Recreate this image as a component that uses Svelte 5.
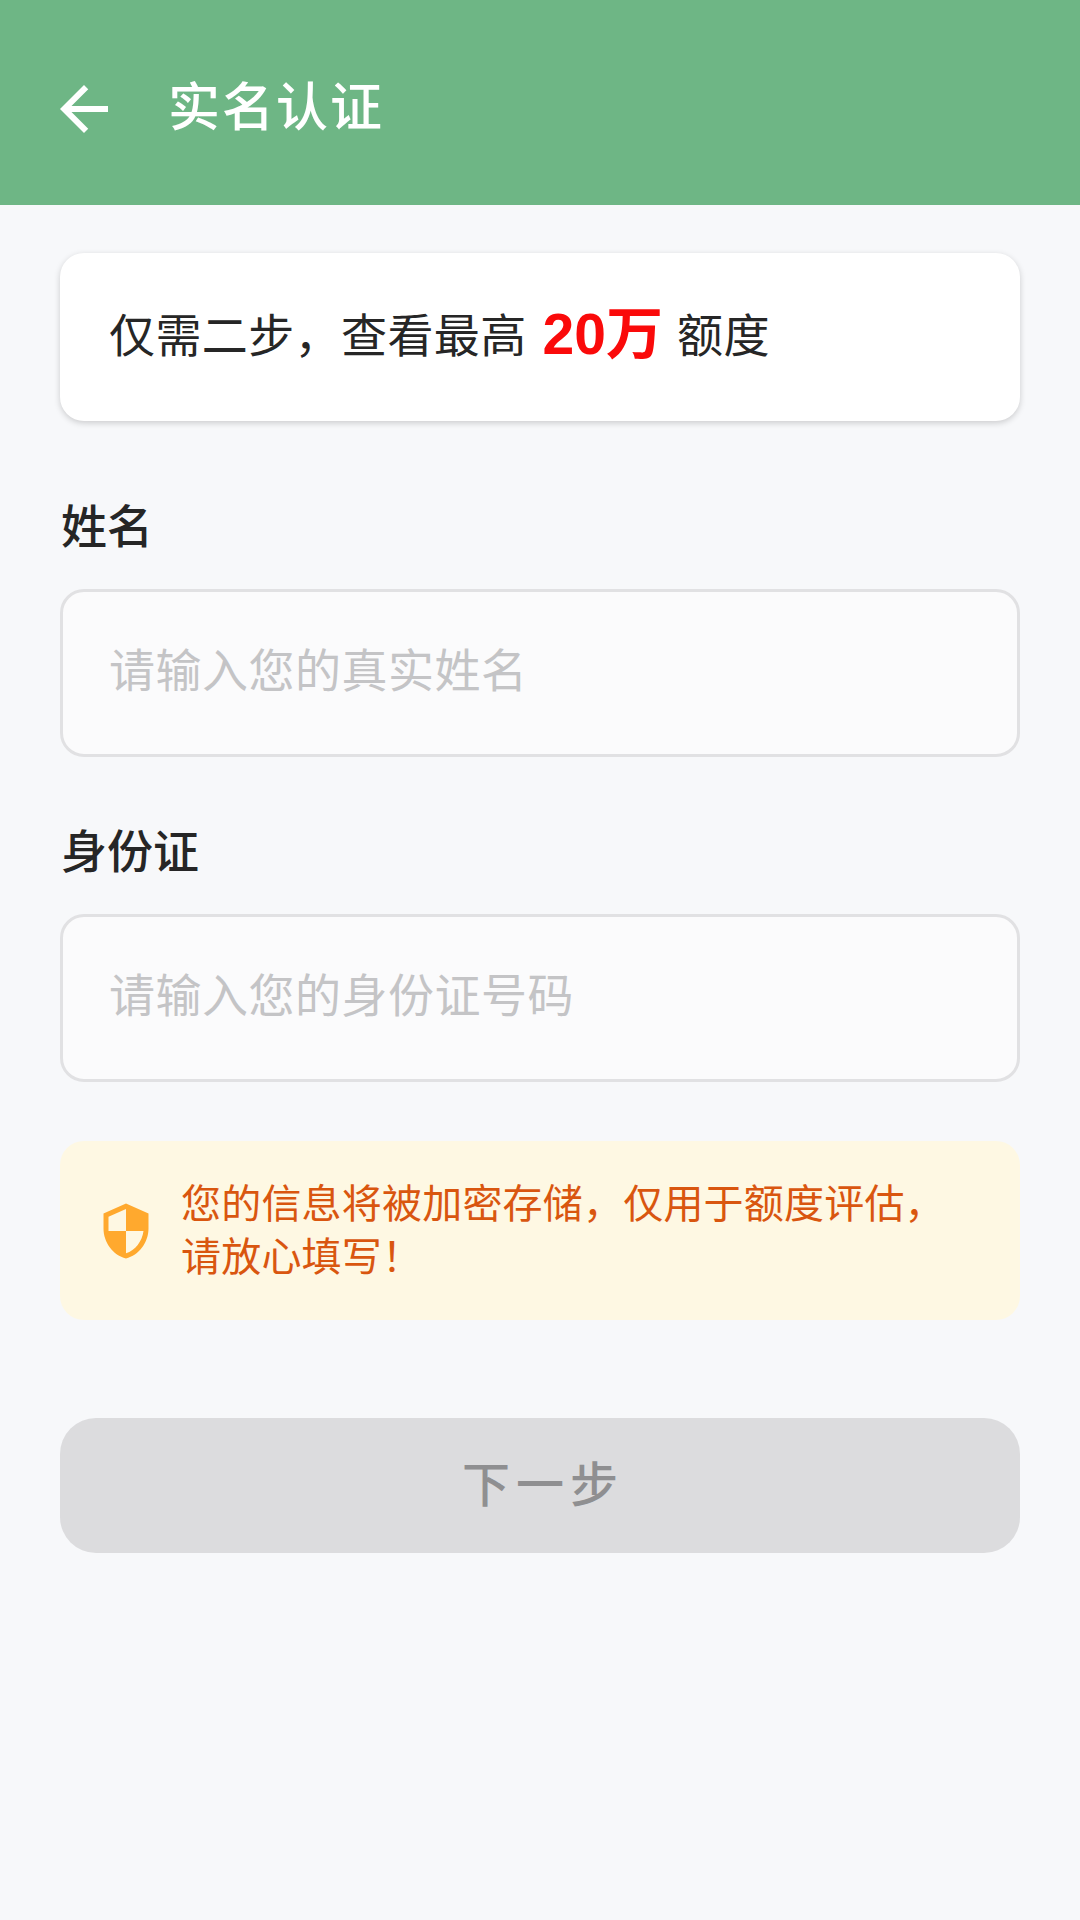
<script>
  let name = $state('');
  let idCard = $state('');
</script>

<div class="page">
  <header class="bar">
    <svg class="back" viewBox="0 0 24 24" aria-hidden="true"><path d="M20 11H7.83l5.59-5.59L12 4l-8 8 8 8 1.41-1.41L7.83 13H20v-2z" /></svg>
    <h1>实名认证</h1>
  </header>
  <main class="content">
    <section class="card"><span>仅需二步，查看最高<b>20万</b>额度</span></section>
    <label class="label first" for="name">姓名</label>
    <input id="name" class="field filled" placeholder="请输入您的真实姓名" bind:value={name} />
    <label class="label" for="idc">身份证</label>
    <input id="idc" class="field" placeholder="请输入您的身份证号码" bind:value={idCard} />
    <div class="notice">
      <svg class="shield" viewBox="0 0 24 24" aria-hidden="true"><path d="M12 1L3 5v6c0 5.55 3.84 10.74 9 12 5.16-1.26 9-6.45 9-12V5l-9-4zm0 10.99h7c-.53 4.12-3.28 7.79-7 8.94V12H5V6.3l7-3.11v8.8z" /></svg>
      <p>您的信息将被加密存储，仅用于额度评估，请放心填写！</p>
    </div>
    <button class="next" disabled>下一步</button>
  </main>
</div>

<style>
  :global(body) { margin: 0; background: #f7f8fa; }
  .page {
    min-height: 1920px;
    background: #f7f8fa;
    font-family: "Noto Sans CJK SC", "Noto Sans", sans-serif;
    color: #262626;
  }
  .bar {
    height: 205px;
    background: #6eb685;
    display: flex;
    align-items: center;
    padding-left: 48px;
    box-sizing: border-box;
    color: #fff;
  }
  .back { width: 72px; height: 72px; fill: #fff; margin-top: 12px; }
  h1 { margin: 0 0 0 48px; font-size: 52px; font-weight: 500; letter-spacing: 2px; line-height: 1; position: relative; top: 1px; }
  .content { padding: 48px 60px 0; display: flex; flex-direction: column; }
  .card {
    height: 168px;
    box-sizing: border-box;
    border-radius: 24px;
    background: #fff;
    box-shadow: 0 2px 6px rgba(0, 0, 0, 0.18);
    padding: 0 0 16px 49px;
    display: flex;
    align-items: center;
    font-size: 46px;
    letter-spacing: 0.4px;
  }
  .card b { font-family: "Liberation Sans", "Noto Sans CJK SC", sans-serif; color: #fa0a0a; font-size: 57px; font-weight: 700; margin: 0 14px 0 16px; letter-spacing: 0; vertical-align: -2px; }
  .label { font-size: 46px; font-weight: 500; margin-top: 59px; line-height: 64px; padding-left: 1px; }
  .label.first { margin-top: 70px; }
  .label + .field { margin-top: 34px; }
  .field {
    height: 168px;
    box-sizing: border-box;
    border: 3px solid #e1e1e3;
    border-radius: 24px;
    background: #fbfbfc;
    padding: 0 0 12px 46px;
    font: inherit;
    font-size: 46px;
    letter-spacing: 0.5px;
    outline: none;
    width: 100%;
  }
  .field::placeholder { color: #c4c4c6; opacity: 1; }
  .notice {
    margin-top: 59px;
    height: 179px;
    box-sizing: border-box;
    background: #fef8e3;
    border-radius: 24px;
    display: flex;
    align-items: center;
    padding: 0 0 0 36px;
  }
  .shield { width: 60px; height: 60px; fill: #ffa92e; flex: none; }
  p { margin: 0 0 6px 25px; font-size: 40px; line-height: 53px; color: #d9560f; width: 780px; letter-spacing: 0.2px; }
  .next {
    margin-top: 98px;
    height: 135px;
    border: none;
    border-radius: 36px;
    background: #dcdcde;
    color: #8f8f91;
    font: inherit;
    font-size: 48px;
    font-weight: 500;
    letter-spacing: 6px;
    padding: 0 0 10px 6px;
  }
</style>
